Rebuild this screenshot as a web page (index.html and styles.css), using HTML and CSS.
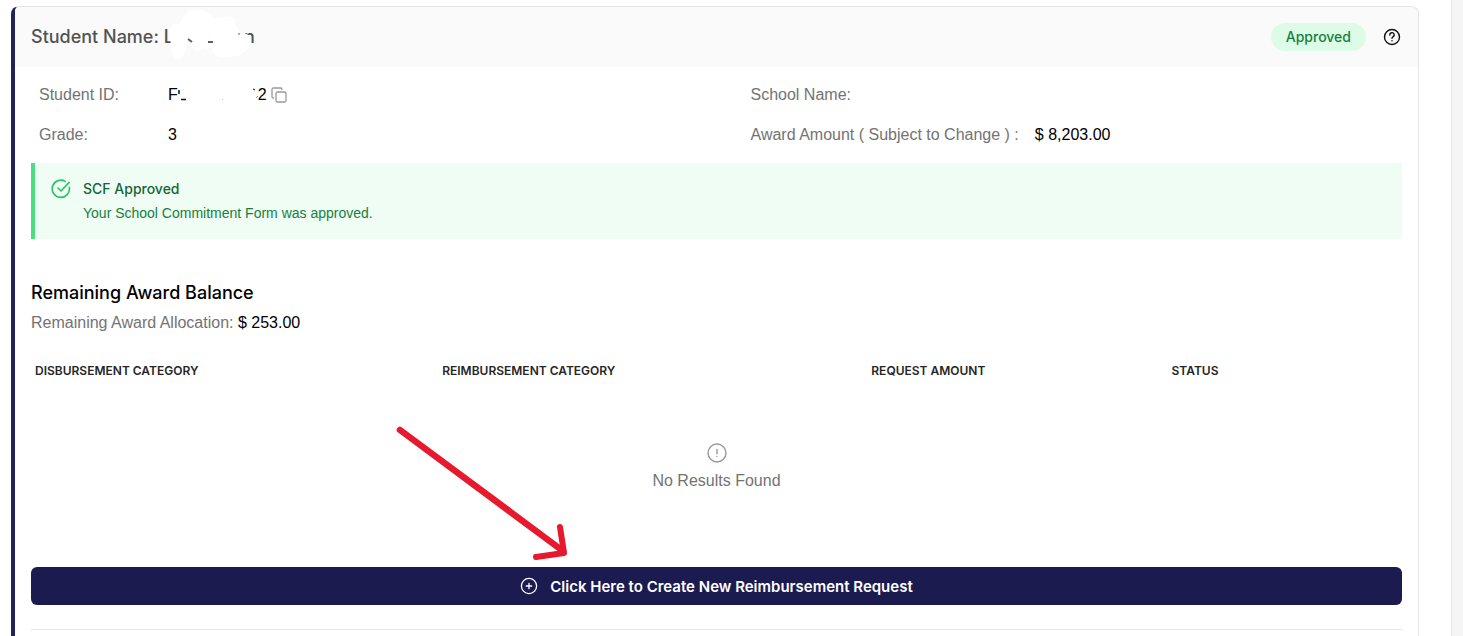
FILE: index.html
```html
<!DOCTYPE html>
<html lang="en">
<head>
    <meta charset="UTF-8">
    <meta name="viewport" content="width=device-width, initial-scale=1.0">
    <title>Student Award</title>
    <link rel="stylesheet" href="styles.css">
</head>

<body>
    <main class="page">
        <section class="card">
            <header class="card-header">
                <h2 class="student-name">Student Name: L<span class="name-hidden"></span>n
                    <svg class="scribble" width="92" height="54" viewBox="0 0 92 54" aria-hidden="true">
                        <g fill="none" stroke="#fff" stroke-width="13" stroke-linecap="round" stroke-linejoin="round">
                            <path d="M13 22 L15 44 L22 18 L30 8 L34 36 L37 8 L44 12 L44 34 L54 17 L66 15 L56 42 L66 43 L70 24 L72 42 L79 38 L81 32 L54 28 L28 26 L14 28"/>
                        </g>
                        <g fill="none" stroke="#58606b" stroke-width="2">
                            <path d="M25 31 L29 34"/>
                            <path d="M45 34 H50"/>
                            <path d="M75 26 H77" stroke-width="1"/>
                        </g>
                    </svg>
                </h2>
                <div class="header-right">
                    <span class="badge">Approved</span>
                    <button class="icon-button" type="button" aria-label="Help">
                        <svg width="18" height="18" viewBox="0 0 18 18" fill="none" stroke="#111" stroke-width="1.4" stroke-linecap="round">
                            <circle cx="9" cy="9" r="7.5"/>
                            <path d="M6.8 7.1 A2.2 2.2 0 1 1 10.2 8.7 C9.3 9.3 9 9.6 9 10.3"/>
                            <path d="M9 12.8 V12.9"/>
                        </svg>
                    </button>
                </div>
            </header>

            <div class="card-body">
                <dl class="details">
                    <div class="detail">
                        <dt>Student ID:</dt>
                        <dd class="student-id">
                            <span>F</span>
                            <svg width="80" height="16" viewBox="0 0 80 16" fill="none" stroke="#111" aria-hidden="true">
                                <path d="M1 3 V7" stroke-width="1.5"/>
                                <path d="M3 12.5 H8" stroke-width="1.5"/>
                                <path d="M44 12.5 H45" stroke="#bbb"/>
                                <path d="M75 2 L77 3"/>
                                <path d="M78 11 L80 9" stroke="#888"/>
                            </svg>
                            <span>2</span>
                            <button class="icon-button copy" type="button" aria-label="Copy student ID">
                                <svg width="16" height="16" viewBox="0 0 16 16" fill="none" stroke="#9a9a9a" stroke-width="1.3" stroke-linecap="round" stroke-linejoin="round">
                                    <rect x="5" y="5" width="10" height="10" rx="1.5"/>
                                    <path d="M2.5 11 C1.6 11 1 10.4 1 9.5 V2.5 C1 1.6 1.6 1 2.5 1 H9.5 C10.4 1 11 1.6 11 2.5"/>
                                </svg>
                            </button>
                        </dd>
                    </div>
                    <div class="detail">
                        <dt>School Name:</dt>
                        <dd></dd>
                    </div>
                    <div class="detail">
                        <dt>Grade:</dt>
                        <dd>3</dd>
                    </div>
                    <div class="detail">
                        <dt>Award Amount ( Subject to Change ) :</dt>
                        <dd>$ 8,203.00</dd>
                    </div>
                </dl>

                <div class="alert">
                    <svg width="20" height="20" viewBox="0 0 20 20" fill="none" stroke="#22c55e" stroke-width="1.6" stroke-linecap="round" stroke-linejoin="round" aria-hidden="true">
                        <path d="M18.3 8.4 A8.6 8.6 0 1 1 14.2 2.4"/>
                        <path d="M7 9 L10 12 L18.2 3.4"/>
                    </svg>
                    <div>
                        <p class="alert-title">SCF Approved</p>
                        <p class="alert-text">Your School Commitment Form was approved.</p>
                    </div>
                </div>

                <h3 class="balance-title">Remaining Award Balance</h3>
                <p class="balance">Remaining Award Allocation: <span class="amount">$ 253.00</span></p>

                <table class="requests">
                    <thead>
                        <tr>
                            <th class="col-disbursement">Disbursement Category</th>
                            <th class="col-reimbursement">Reimbursement Category</th>
                            <th class="col-amount">Request Amount</th>
                            <th>Status</th>
                        </tr>
                    </thead>
                    <tbody>
                        <tr>
                            <td colspan="4">
                                <div class="empty">
                                    <svg width="20" height="20" viewBox="0 0 20 20" fill="none" stroke="#999" stroke-width="1.4" stroke-linecap="round" aria-hidden="true">
                                        <circle cx="10" cy="10" r="9"/>
                                        <path d="M10 6.5 V10.7"/>
                                        <path d="M10 13.4 V13.5"/>
                                    </svg>
                                    <span>No Results Found</span>
                                </div>
                            </td>
                        </tr>
                    </tbody>
                </table>

                <div class="create-row">
                    <svg class="arrow" width="174" height="138" viewBox="0 0 174 138" fill="none" stroke="#e6192e" stroke-width="6" stroke-linecap="round" stroke-linejoin="round" aria-hidden="true">
                        <path d="M5 5 L168 126" stroke-width="6.5"/>
                        <path d="M165 102 L169 128 L141 132"/>
                    </svg>
                    <button class="create-button" type="button">
                        <svg width="18" height="18" viewBox="0 0 18 18" fill="none" stroke="#fff" stroke-width="1.3" stroke-linecap="round" aria-hidden="true">
                            <circle cx="9" cy="9" r="7.6"/>
                            <path d="M6.3 9 H11.7 M9 6.3 V11.7"/>
                        </svg>
                        Click Here to Create New Reimbursement Request
                    </button>
                </div>
                <hr class="divider">
            </div>
        </section>
    </main>
</body>
</html>
```
FILE: styles.css
```css
* {
    box-sizing: border-box;
}

body {
    font-family: 'Liberation Sans', Arial, sans-serif;
    font-size: 16px;
    line-height: 24px;
    color: #000;
    background-color: #f5f5f5;
    margin: 0;
    padding-right: 11px;
}

h2, h3, p, dl, dd {
    margin: 0;
}

h2, h3, th, button, .badge, .alert-title {
    font-family: Inter, 'Liberation Sans', sans-serif;
}

button {
    border: none;
    cursor: pointer;
}

svg {
    display: block;
    flex-shrink: 0;
}

.page {
    min-height: 100vh;
    display: flex;
    background-color: #fff;
    border-right: 1px solid #e8e8e8;
    padding: 6px 32px 0 11px;
}

.card {
    flex: 1;
    border: 1px solid #e5e5e5;
    border-left: 4px solid #23235b;
    border-bottom: none;
    border-radius: 8px 8px 0 0;
}

.card-header {
    display: flex;
    align-items: center;
    justify-content: space-between;
    height: 60px;
    padding: 0 17px 0 16px;
    background-color: #fafafa;
    border-radius: 4px 8px 0 0;
}

.student-name {
    position: relative;
    font-size: 18px;
    font-weight: 500;
    color: #525252;
}

.name-hidden {
    display: inline-block;
    width: 70px;
}

/* white marker over the name */
.scribble {
    position: absolute;
    right: 0;
    top: -17px;
}

.header-right {
    display: flex;
    align-items: center;
    gap: 17px;
}

.badge {
    padding: 4px 15px;
    border-radius: 14px;
    font-size: 14px;
    font-weight: 500;
    line-height: 20px;
    color: #15803d;
    background-color: #dcfce7;
}

.icon-button {
    padding: 0;
    background: none;
}

.card-body {
    padding: 16px 16px 6px;
}

.details {
    display: grid;
    grid-template-columns: 1fr 1fr;
    gap: 16px 68px;
    padding: 0 8px;
}

.detail {
    display: flex;
    gap: 16px;
}

.detail dt {
    min-width: 113px;
    color: #737373;
}

.student-id {
    display: flex;
    align-items: center;
}

.copy {
    margin-left: 4px;
}

.alert {
    display: flex;
    gap: 12px;
    margin-top: 16px;
    padding: 16px;
    border-left: 4px solid #4ade80;
    background-color: #f0fdf4;
    font-size: 14px;
    line-height: 20px;
}

.alert-title {
    margin-bottom: 4px;
    font-weight: 500;
    color: #166534;
}

.alert-text {
    color: #15803d;
}

.balance-title {
    margin-top: 40px;
    font-size: 18px;
    font-weight: 500;
    line-height: 28px;
}

.balance {
    margin-top: 4px;
    color: #737373;
}

.amount {
    color: #000;
}

.requests {
    width: 100%;
    margin-top: 16px;
    border-collapse: collapse;
    table-layout: fixed;
}

.requests th {
    height: 40px;
    padding: 0 4px;
    font-size: 12px;
    font-weight: 600;
    line-height: 16px;
    text-align: left;
    text-transform: uppercase;
    color: #262626;
}

.requests td {
    padding: 0;
}

.col-disbursement {
    width: 29.7%;
}

.col-reimbursement {
    width: 31.3%;
}

.col-amount {
    width: 21.9%;
}

.empty {
    display: flex;
    flex-direction: column;
    align-items: center;
    gap: 6px;
    padding: 52px 0 74px;
    color: #737373;
}

.create-row {
    position: relative;
}

/* red pointer drawn over the table */
.arrow {
    position: absolute;
    left: 364px;
    bottom: 42px;
}

.create-button {
    display: flex;
    align-items: center;
    justify-content: center;
    gap: 12px;
    width: 100%;
    height: 38px;
    padding: 0;
    border-radius: 6px;
    font-size: 15px;
    font-weight: 600;
    color: #fff;
    background-color: #1b1b50;
}

.divider {
    margin: 24px 0 0;
    border: none;
    border-top: 1px solid #e5e5e5;
}
```
